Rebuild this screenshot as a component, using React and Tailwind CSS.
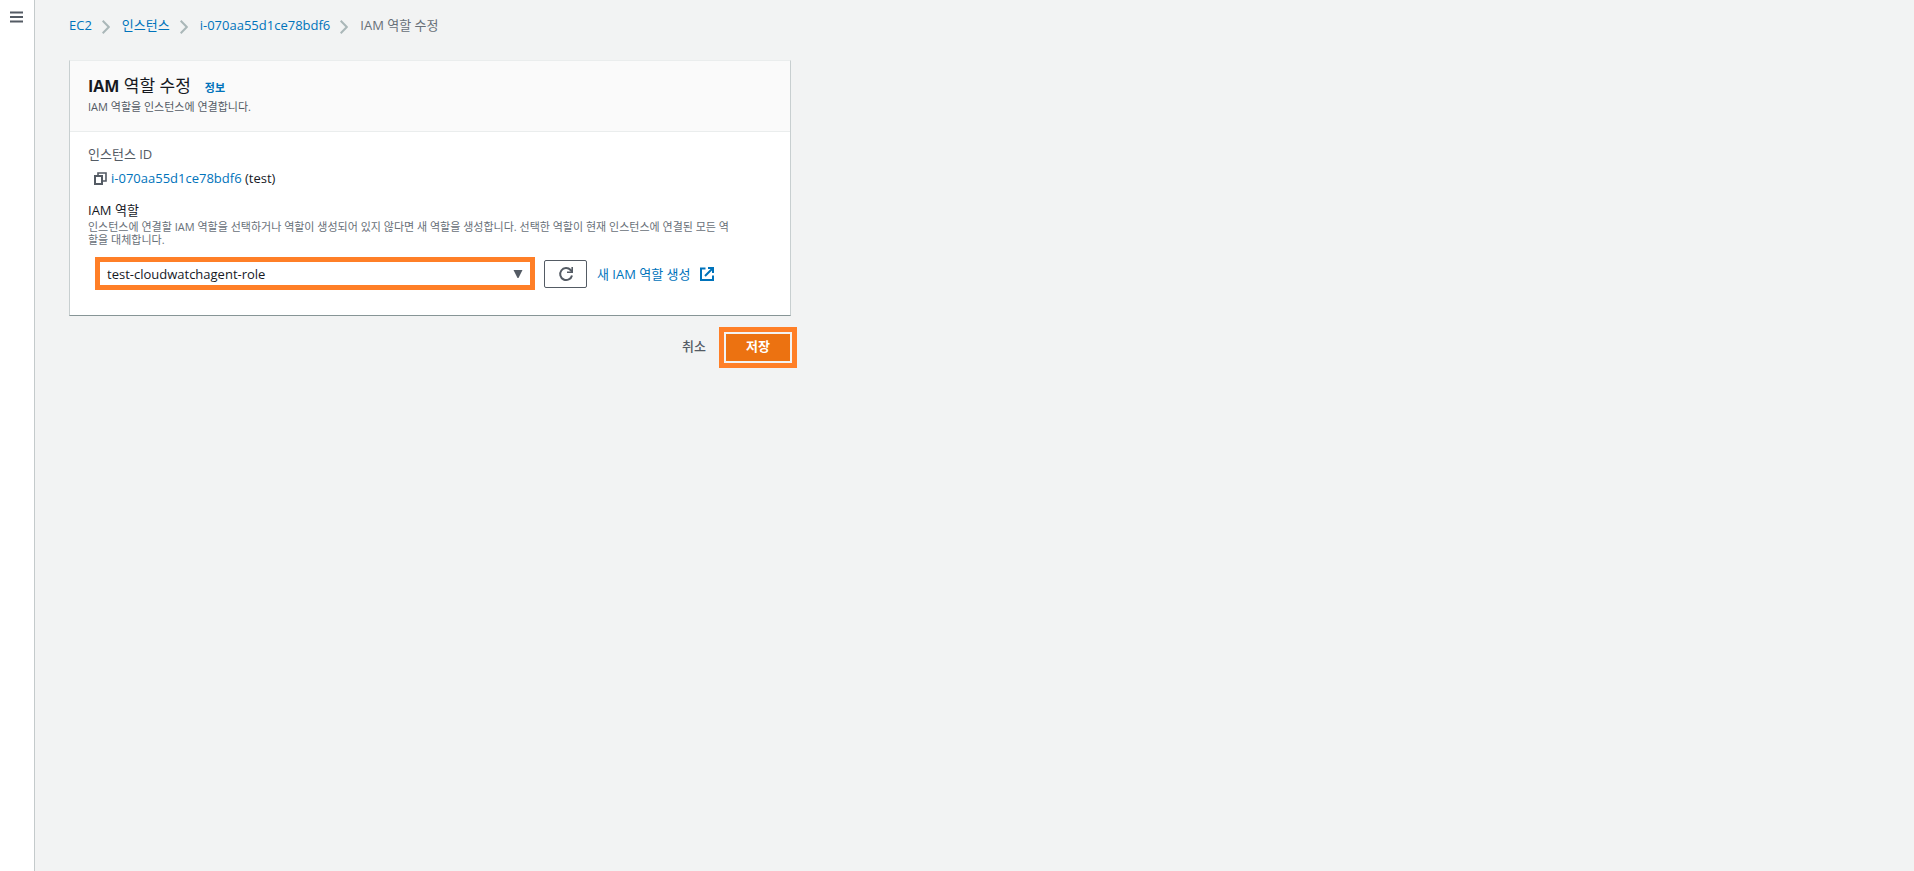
import React, { useState } from 'react';

const crumbs = ['EC2', '인스턴스', 'i-070aa55d1ce78bdf6'];

function ChevronIcon() {
    return (
        <svg className="w-2 h-[14px] mt-1" viewBox="0 0 8 14" fill="none" stroke="#aab7b8" strokeWidth="2" aria-hidden="true">
            <path d="M.7 .7L6.8 7 .7 13.3" />
        </svg>
    );
}

function CopyIcon() {
    return (
        <svg className="w-[13px] h-[13px]" viewBox="0 0 13 13" fill="none" stroke="#545b64" aria-hidden="true">
            <path d="M1 4h7v8H1z" strokeWidth="2" />
            <path d="M4 4V1h8v8H8.5" strokeWidth="1.6" />
        </svg>
    );
}

function RefreshIcon() {
    return (
        <svg className="w-4 h-4" viewBox="0 0 16 16" fill="none" stroke="#545b64" strokeWidth="2" aria-hidden="true">
            <path d="M14 9.5A6 6 0 1 1 12.6 4L14 5.6" />
            <path d="M14.2 1v5.2H9" strokeWidth="1.6" />
        </svg>
    );
}

function ExternalIcon() {
    return (
        <svg className="w-[14px] h-[14px]" viewBox="0 0 14 14" fill="none" stroke="#0073bb" strokeWidth="2" aria-hidden="true">
            <path d="M5.5 1.5H1V13h12V8.5" />
            <path d="M8 1h5v5M13 1L5 9" />
        </svg>
    );
}

export default function ModifyIamRole() {
    const [role, setRole] = useState('test-cloudwatchagent-role');

    return (
        <div className="flex min-h-screen bg-[#f2f3f3] text-[#16191f] text-[13px] leading-5 font-['Open_Sans','Noto_Sans_CJK_KR',sans-serif]">
            <aside className="w-[35px] shrink-0 bg-white border-r border-[#c4cacb]">
                <button type="button" aria-label="메뉴" className="block ml-[10px] mt-[11px]">
                    <svg className="w-[13px] h-3" viewBox="0 0 13 12" stroke="#545b64" strokeWidth="2" aria-hidden="true">
                        <path d="M0 1.5h13M0 6h13M0 10.5h13" />
                    </svg>
                </button>
            </aside>

            <main className="flex-1 px-[34px] pt-[15px]">
                <nav className="flex items-center">
                    {crumbs.map((crumb) => (
                        <div key={crumb} className="flex items-center">
                            <a href="#" className="text-[#0073bb]">{crumb}</a>
                            <span className="pl-[10px] pr-3"><ChevronIcon /></span>
                        </div>
                    ))}
                    <span className="text-[#687078]">IAM 역할 수정</span>
                </nav>

                <form className="max-w-[722px] mt-[25px]" onSubmit={(e) => e.preventDefault()}>
                    <section className="bg-white border border-t-[#eaeded] border-x-[#c8cfd0] border-b-[#879596]">
                        <header className="bg-[#fafafa] border-b border-[#eaeded] px-[18px] pt-[13px] pb-4">
                            <div className="flex items-baseline gap-[14px]">
                                <h1 className="text-[17px] leading-6 font-normal">
                                    <span className="text-base font-bold">IAM</span> 역할 수정
                                </h1>
                                <a href="#" className="text-[11px] font-bold text-[#0073bb]">정보</a>
                            </div>
                            <p className="mt-px text-[11px] leading-4 text-[#545b64]">IAM 역할을 인스턴스에 연결합니다.</p>
                        </header>

                        <div className="px-[18px] pt-3 pb-[25px]">
                            <div className="text-[#545b64]">인스턴스 ID</div>
                            <div className="flex items-center gap-1 pl-[6px] mt-1">
                                <button type="button" aria-label="복사"><CopyIcon /></button>
                                <span><a href="#" className="text-[#0073bb]">i-070aa55d1ce78bdf6</a> (test)</span>
                            </div>

                            <label htmlFor="role" className="block mt-3">IAM 역할</label>
                            <p className="text-[11px] leading-[13px] text-[#687078]">
                                인스턴스에 연결할 IAM 역할을 선택하거나 역할이 생성되어 있지 않다면 새 역할을 생성합니다. 선택한 역할이 현재 인스턴스에 연결된 모든 역<br />할을 대체합니다.
                            </p>

                            <div className="flex items-center pl-[7px] mt-[11px]">
                                <div className="relative w-[440px]">
                                    <select
                                        id="role"
                                        value={role}
                                        onChange={(e) => setRole(e.target.value)}
                                        className="block w-full h-[33px] appearance-none bg-white border-5 border-[#ff7f27] pl-[7px]"
                                    >
                                        <option>test-cloudwatchagent-role</option>
                                    </select>
                                    <svg className="absolute right-3 top-[13px] w-[10px] h-2 pointer-events-none" viewBox="0 0 10 8" fill="#545b64" aria-hidden="true">
                                        <path d="M.5 0h9L5.5 8h-1z" />
                                    </svg>
                                </div>
                                <button type="button" aria-label="새로 고침" className="flex items-center justify-center w-[43px] h-7 ml-[9px] border border-[#545b64] rounded-xs">
                                    <RefreshIcon />
                                </button>
                                <a href="#" className="flex items-center gap-[10px] ml-[10px] text-[#0073bb]">
                                    새 IAM 역할 생성 <ExternalIcon />
                                </a>
                            </div>
                        </div>
                    </section>

                    <div className="flex justify-end items-center gap-5 mt-[17px] pr-px">
                        <button type="button" className="h-7 pb-[3px] text-[#545b64] font-medium">취소</button>
                        <button type="submit" className="w-16 h-[27px] pb-[3px] bg-[#ec7211] text-white font-bold outline-5 outline-offset-2 outline-[#ff7f27]">저장</button>
                    </div>
                </form>
            </main>
        </div>
    );
}
